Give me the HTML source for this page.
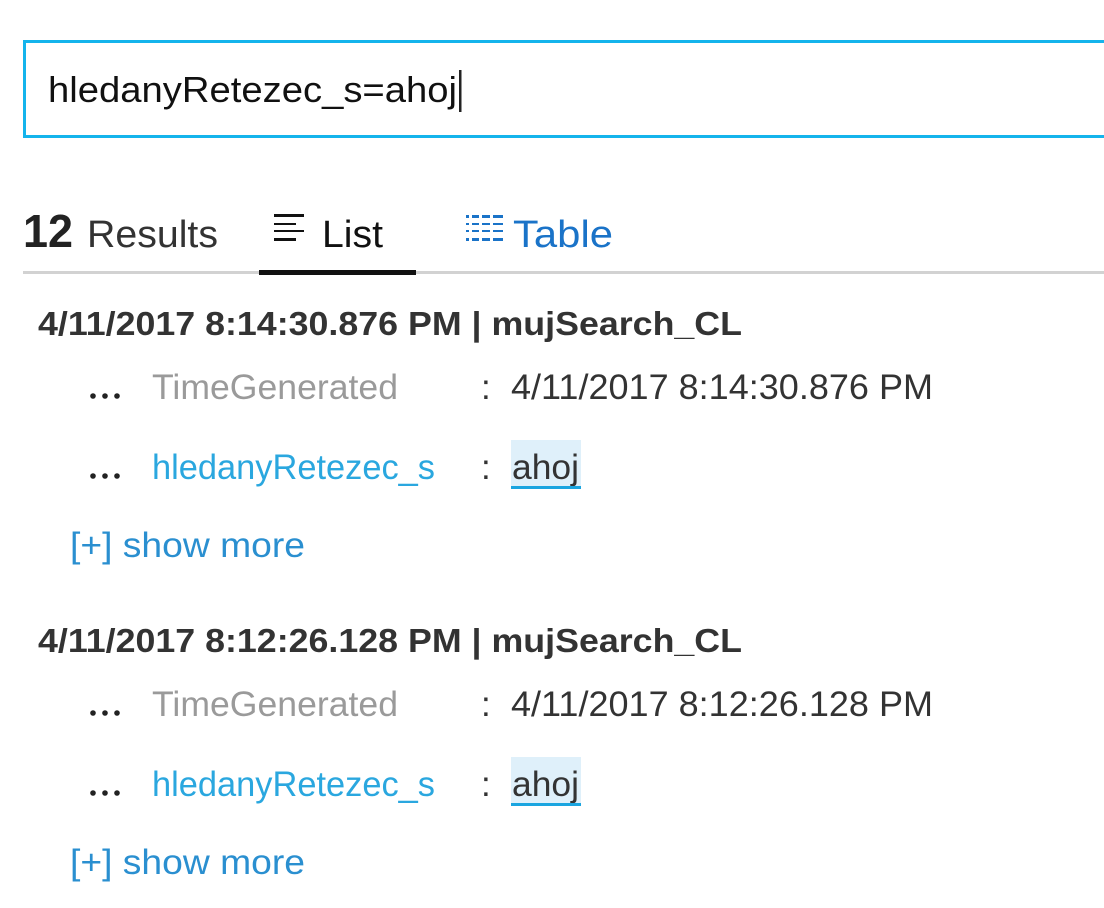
<!DOCTYPE html>
<html><head><meta charset="utf-8"><style>
html,body{margin:0;padding:0;background:#fff;width:1104px;height:908px;overflow:hidden}
svg{display:block}
text{font-family:"Liberation Sans",sans-serif}
</style></head><body>
<svg width="1104" height="908" viewBox="0 0 1104 908" xmlns="http://www.w3.org/2000/svg">
<rect x="24.5" y="41.5" width="1090" height="95" fill="#fff" stroke="#14b4ec" stroke-width="3"/>
<text x="48" y="102" font-size="36" fill="#111" textLength="409" lengthAdjust="spacingAndGlyphs">hledanyRetezec_s=ahoj</text>
<rect x="459" y="70" width="2.5" height="42" fill="#222"/>

<text x="23" y="247" font-size="46" font-weight="bold" fill="#222" textLength="50" lengthAdjust="spacingAndGlyphs">12</text>
<text x="87" y="247" font-size="38" fill="#333" textLength="131" lengthAdjust="spacingAndGlyphs">Results</text>
<g fill="#111"><rect x="274" y="214" width="30" height="3"/><rect x="274" y="223" width="22" height="2"/><rect x="274" y="230" width="30" height="2"/><rect x="274" y="238" width="22" height="3"/></g>
<text x="322" y="247" font-size="38" fill="#111" textLength="61" lengthAdjust="spacingAndGlyphs">List</text>
<g fill="#1a73c8">
<rect x="466" y="215" width="3" height="3"/><rect x="472" y="215" width="31" height="3"/>
<rect x="466" y="223" width="3" height="2"/><rect x="472" y="223" width="31" height="2"/>
<rect x="466" y="230" width="3" height="2"/><rect x="472" y="230" width="31" height="2"/>
<rect x="466" y="238" width="3" height="3"/><rect x="472" y="238" width="31" height="3"/>
</g>
<g fill="#fff"><rect x="479" y="214" width="3" height="28"/><rect x="490" y="214" width="3" height="28"/></g>
<text x="513" y="247" font-size="38" fill="#1a73c8" textLength="100" lengthAdjust="spacingAndGlyphs">Table</text>
<rect x="23" y="271" width="1081" height="3" fill="#d2d2d2"/>
<rect x="259" y="270" width="157" height="5" fill="#111"/>

<g>
<text x="38" y="335" font-size="33" font-weight="bold" fill="#333" textLength="704" lengthAdjust="spacingAndGlyphs">4/11/2017 8:14:30.876 PM | mujSearch_CL</text>
<g fill="#222"><circle cx="93" cy="396" r="2.8"/><circle cx="105" cy="396" r="2.8"/><circle cx="117" cy="396" r="2.8"/></g>
<text x="152" y="399" font-size="35" fill="#9a9a9a" textLength="246" lengthAdjust="spacingAndGlyphs">TimeGenerated</text>
<text x="481" y="399" font-size="35" fill="#333">:</text>
<text x="511" y="399" font-size="35" fill="#333" textLength="422" lengthAdjust="spacingAndGlyphs">4/11/2017 8:14:30.876 PM</text>
<g fill="#222"><circle cx="93" cy="476" r="2.8"/><circle cx="105" cy="476" r="2.8"/><circle cx="117" cy="476" r="2.8"/></g>
<text x="152" y="479" font-size="35" fill="#2aa7df" textLength="283" lengthAdjust="spacingAndGlyphs">hledanyRetezec_s</text>
<text x="481" y="479" font-size="35" fill="#333">:</text>
<rect x="511" y="440" width="70" height="48" fill="#dff0fa"/>
<text x="512" y="479" font-size="35" fill="#333" textLength="67" lengthAdjust="spacingAndGlyphs">ahoj</text>
<rect x="511" y="486" width="70" height="3" fill="#1aa5e0"/>
<text x="70" y="557" font-size="35" fill="#2a8fd0" textLength="235" lengthAdjust="spacingAndGlyphs">[+] show more</text>
</g>
<g transform="translate(0,317)">
<text x="38" y="335" font-size="33" font-weight="bold" fill="#333" textLength="704" lengthAdjust="spacingAndGlyphs">4/11/2017 8:12:26.128 PM | mujSearch_CL</text>
<g fill="#222"><circle cx="93" cy="396" r="2.8"/><circle cx="105" cy="396" r="2.8"/><circle cx="117" cy="396" r="2.8"/></g>
<text x="152" y="399" font-size="35" fill="#9a9a9a" textLength="246" lengthAdjust="spacingAndGlyphs">TimeGenerated</text>
<text x="481" y="399" font-size="35" fill="#333">:</text>
<text x="511" y="399" font-size="35" fill="#333" textLength="422" lengthAdjust="spacingAndGlyphs">4/11/2017 8:12:26.128 PM</text>
<g fill="#222"><circle cx="93" cy="476" r="2.8"/><circle cx="105" cy="476" r="2.8"/><circle cx="117" cy="476" r="2.8"/></g>
<text x="152" y="479" font-size="35" fill="#2aa7df" textLength="283" lengthAdjust="spacingAndGlyphs">hledanyRetezec_s</text>
<text x="481" y="479" font-size="35" fill="#333">:</text>
<rect x="511" y="440" width="70" height="48" fill="#dff0fa"/>
<text x="512" y="479" font-size="35" fill="#333" textLength="67" lengthAdjust="spacingAndGlyphs">ahoj</text>
<rect x="511" y="486" width="70" height="3" fill="#1aa5e0"/>
<text x="70" y="557" font-size="35" fill="#2a8fd0" textLength="235" lengthAdjust="spacingAndGlyphs">[+] show more</text>
</g>
</svg>
</body></html>
